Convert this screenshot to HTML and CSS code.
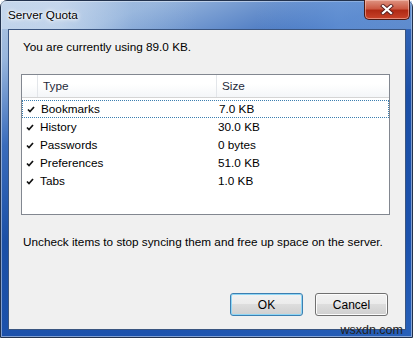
FILE: index.html
```html
<!DOCTYPE html>
<html lang="en">

<head>
    <meta charset="UTF-8">
    <title>Server Quota</title>
    <link rel="stylesheet" href="styles.css">
</head>

<body>
    <div class="window">
        <div class="titlebar">
            <span class="title">Server Quota</span>
            <div class="close-btn">
                <svg width="14" height="11" viewBox="0 0 14 11">
                    <path d="M3 2 L11 9 M11 2 L3 9" stroke="#5a2020" stroke-width="4" stroke-linecap="square" />
                    <path d="M3 2 L11 9 M11 2 L3 9" stroke="#fff" stroke-width="2.2" stroke-linecap="square" />
                </svg>
            </div>
        </div>

        <div class="client">
            <p class="usage">You are currently using 89.0 KB.</p>

            <div class="list">
                <div class="list-header">
                    <div class="col-check"></div>
                    <div class="col-type">Type</div>
                    <div class="col-size">Size</div>
                </div>
                <div class="list-body">
                    <div class="row focused">
                        <div class="col-check"><svg class="tick" width="8" height="7" viewBox="0 0 8 7"><path d="M1 3.5 L3 5.5 L7 1" /></svg></div>
                        <div class="col-type">Bookmarks</div>
                        <div class="col-size">7.0 KB</div>
                    </div>
                    <div class="row">
                        <div class="col-check"><svg class="tick" width="8" height="7" viewBox="0 0 8 7"><path d="M1 3.5 L3 5.5 L7 1" /></svg></div>
                        <div class="col-type">History</div>
                        <div class="col-size">30.0 KB</div>
                    </div>
                    <div class="row">
                        <div class="col-check"><svg class="tick" width="8" height="7" viewBox="0 0 8 7"><path d="M1 3.5 L3 5.5 L7 1" /></svg></div>
                        <div class="col-type">Passwords</div>
                        <div class="col-size">0 bytes</div>
                    </div>
                    <div class="row">
                        <div class="col-check"><svg class="tick" width="8" height="7" viewBox="0 0 8 7"><path d="M1 3.5 L3 5.5 L7 1" /></svg></div>
                        <div class="col-type">Preferences</div>
                        <div class="col-size">51.0 KB</div>
                    </div>
                    <div class="row">
                        <div class="col-check"><svg class="tick" width="8" height="7" viewBox="0 0 8 7"><path d="M1 3.5 L3 5.5 L7 1" /></svg></div>
                        <div class="col-type">Tabs</div>
                        <div class="col-size">1.0 KB</div>
                    </div>
                </div>
            </div>

            <p class="hint">Uncheck items to stop syncing them and free up space on the server.</p>

            <div class="buttons">
                <button class="btn default">OK</button>
                <button class="btn">Cancel</button>
            </div>
        </div>

        <span class="watermark">wsxdn.com</span>
    </div>
</body>

</html>
```

FILE: styles.css
```css
body {
    margin: 0;
    font-family: "Liberation Sans", Arial, sans-serif;
    font-size: 11.75px;
    color: #000;
}

.window {
    position: relative;
    width: 413px;
    height: 338px;
    box-sizing: border-box;
    display: flex;
    flex-direction: column;
    padding: 0 6px 7px 7px;
    border: 1px solid #22324d;
    border-radius: 7px 7px 0 0;
    background: linear-gradient(160deg, #b3c8e3 0%, #98b6dd 12%, #3a6cbc 30%, #1b4fa6 50%, #1c52ad 80%, #2760b9 100%);
    box-shadow: inset 0 0 0 1px rgba(255,255,255,0.45);
}

.titlebar {
    height: 28px;
    display: flex;
    align-items: flex-start;
    margin: 0 -6px 0 -7px;
    padding: 0 2px 0 7px;
    background: linear-gradient(to right, rgba(210,225,242,0.6) 0%, rgba(220,232,245,0.55) 14%, rgba(160,190,225,0.2) 32%, rgba(20,70,160,0) 48%, rgba(20,70,160,0) 62%, rgba(120,165,225,0.55) 82%, rgba(140,180,230,0.5) 100%);
}

.title {
    margin-top: 6px;
    line-height: 16px;
    text-shadow: 0 0 6px #fff, 0 0 4px #fff, 0 0 2px #fff;
}

.close-btn {
    margin-left: auto;
    width: 46px;
    height: 20px;
    margin-top: -1px;
    box-sizing: border-box;
    border: 1px solid #4a1a14;
    border-top: none;
    border-radius: 0 0 5px 5px;
    background: linear-gradient(to bottom, #de9482 0%, #cc5a44 45%, #b02a14 55%, #c8432a 100%);
    box-shadow: inset 0 0 0 1px rgba(255,210,200,0.5);
    display: flex;
    align-items: center;
    justify-content: center;
}

.client {
    flex: 1;
    display: flex;
    flex-direction: column;
    background: #f0f0f0;
    border: 1px solid #3a5580;
    padding: 9px 15px 13px 12px;
}

.usage {
    margin: 0 0 19px 2px;
    line-height: 16px;
}

.list {
    height: 141px;
    box-sizing: border-box;
    border: 1px solid #828790;
    background: #fff;
}

.list-header {
    display: flex;
    height: 22px;
    border-bottom: 1px solid #d5d5d5;
    background: linear-gradient(to bottom, #ffffff 0%, #ffffff 40%, #f4f6f8 100%);
    color: #1e2a3a;
}

.list-header > div {
    line-height: 22px;
    border-right: 1px solid #e3e6ea;
}

.list-header .col-size {
    border-right: none;
}

.col-check {
    width: 15px;
    flex-shrink: 0;
}

.col-type {
    width: 179px;
    flex-shrink: 0;
    padding-left: 3px;
    box-sizing: border-box;
}

.list-header .col-type {
    padding-left: 5px;
}

.col-size {
    flex: 1;
    padding-left: 2px;
}

.list-header .col-size {
    padding-left: 5px;
}

.list-body {
    padding-top: 2px;
}

.row {
    display: flex;
    height: 18px;
    line-height: 18px;
    box-sizing: border-box;
}

.row.focused {
    border: 1px dotted #3c7fb1;
    line-height: 16px;
}

.row .col-check {
    display: flex;
    align-items: center;
    justify-content: center;
}

.tick {
    fill: none;
    stroke: #111;
    stroke-width: 1.7;
}

.hint {
    margin: 19px 0 0 2px;
    line-height: 16px;
}

.buttons {
    margin-top: auto;
    display: flex;
    justify-content: flex-end;
    gap: 12px;
    padding-right: 2px;
}

.btn {
    width: 73px;
    height: 23px;
    font-family: inherit;
    font-size: 12px;
    color: #000;
    border: 1px solid #707070;
    border-radius: 3px;
    background: linear-gradient(to bottom, #f2f2f2 0%, #ebebeb 49%, #dddddd 50%, #cfcfcf 100%);
    box-shadow: inset 0 0 0 1px #fcfcfc;
}

.btn.default {
    border-color: #3c7fb1;
    box-shadow: inset 0 0 0 1px #8fd6f5;
}

.watermark {
    position: absolute;
    right: 9px;
    bottom: 0;
    font-size: 12.5px;
    line-height: 13px;
    color: #222;
}
```
